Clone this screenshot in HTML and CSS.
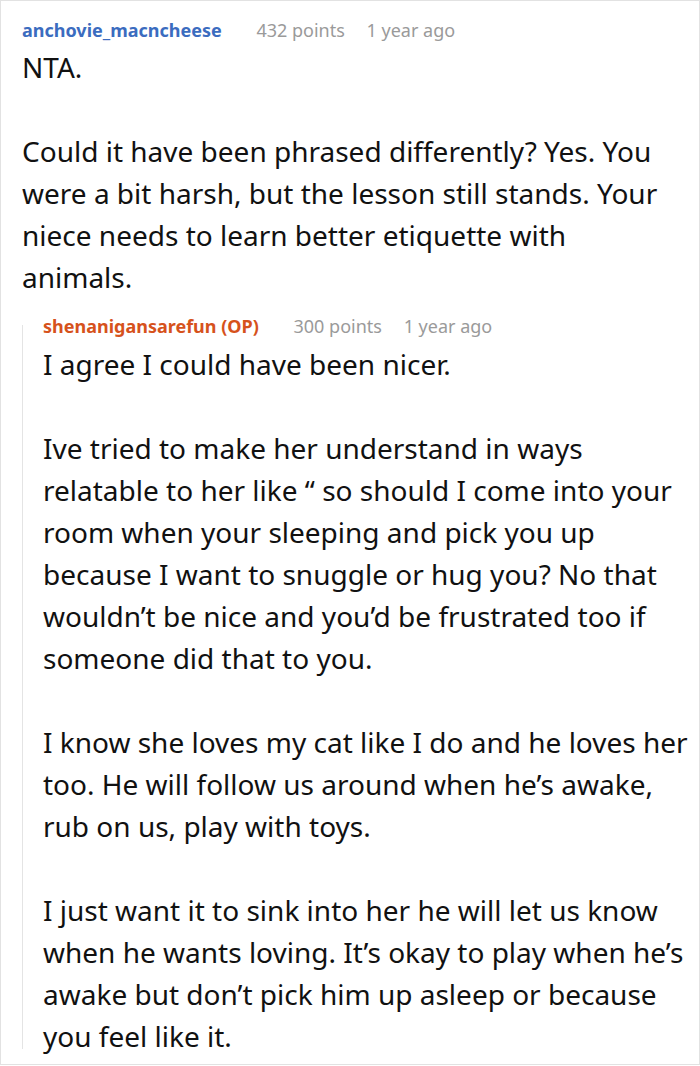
FILE: index.html
```html
<!DOCTYPE html>
<html>
<head>
<meta charset="utf-8">
<link rel="stylesheet" href="styles.css">
</head>
<body>
<div class="card">
  <div class="comment">
    <div class="meta">
      <span class="user">anchovie_macncheese</span>
      <span class="points">432 points</span>
      <span class="time">1 year ago</span>
    </div>
    <div class="body">
      <p>NTA.</p>
      <p>Could it have been phrased differently? Yes. You were a bit harsh, but the lesson still stands. Your niece needs to learn better etiquette with animals.</p>
    </div>
    <div class="reply">
      <div class="meta">
        <span class="user op">shenanigansarefun (OP)</span>
        <span class="points">300 points</span>
        <span class="time">1 year ago</span>
      </div>
      <div class="body">
        <p>I agree I could have been nicer.</p>
        <p>Ive tried to make her understand in ways relatable to her like “ so should I come into your room when your sleeping and pick you up because I want to snuggle or hug you? No that wouldn’t be nice and you’d be frustrated too if someone did that to you.</p>
        <p>I know she loves my cat like I do and he loves her too. He will follow us around when he’s awake, rub on us, play with toys.</p>
        <p>I just want it to sink into her he will let us know when he wants loving. It’s okay to play when he’s awake but don’t pick him up asleep or because you feel like it.</p>
      </div>
    </div>
  </div>
</div>
</body>
</html>
```

FILE: styles.css
```css
html, body {
  margin: 0;
  padding: 0;
  background: #fff;
}
body {
  font-family: "Noto Sans", "Open Sans", sans-serif;
  color: #111;
}
.card {
  width: 700px;
  box-sizing: border-box;
  border: 1px solid #e2e2e2;
  padding: 17px 18px 15px 21px;
}
.meta {
  font-size: 18px;
  line-height: 24px;
  height: 24px;
  margin-bottom: 4px;
  white-space: nowrap;
}
.user {
  font-weight: 700;
  color: #3b6cbf;
  margin-right: 30px;
}
.user.op {
  color: #d6521c;
}
.points {
  color: #9a9a9a;
  margin-right: 17px;
}
.time {
  color: #9a9a9a;
}
.body {
  font-size: 28px;
  line-height: 42px;
}
.body p {
  margin: 0 0 42px 0;
}
.body p:last-child {
  margin-bottom: 0;
}
.reply {
  display: flex;
  flex-direction: column;
  margin-top: 27px;
  margin-right: -12px;
  border-left: 1px solid #e4e4e4;
  padding-left: 20px;
  padding-bottom: 14px;
}
.reply .meta {
  margin-top: -11px;
  margin-bottom: 5px;
}
.reply .body {
  margin-bottom: -22px;
}
```
